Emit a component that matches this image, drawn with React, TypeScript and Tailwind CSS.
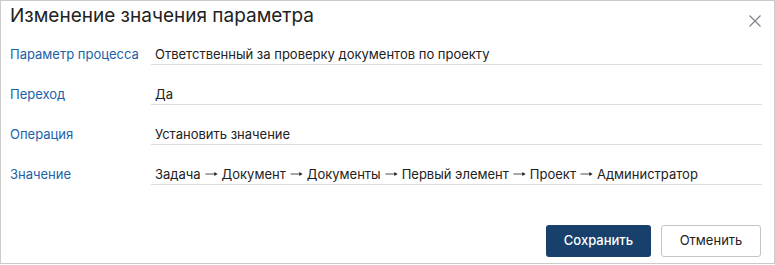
import React from 'react';

const rows: { label: string; value: string[] }[] = [
  { label: 'Параметр процесса', value: ['Ответственный за проверку документов по проекту'] },
  { label: 'Переход', value: ['Да'] },
  { label: 'Операция', value: ['Установить значение'] },
  {
    label: 'Значение',
    value: ['Задача', 'Документ', 'Документы', 'Первый элемент', 'Проект', 'Администратор'],
  },
];

const Arrow = () => (
  <svg width="13" height="8" viewBox="0 0 13 8" className="inline-block align-[1px] mx-[4px]" fill="#222">
    <path d="M0.5 3.6 H10 V4.4 H0.5 Z" />
    <path d="M9.3 2 L12.6 4 L9.3 6 Z" />
  </svg>
);

export default function App() {
  return (
    <div className="w-[775px] h-[264px] border border-[#cbcbcb] bg-white flex flex-col font-['Inter',sans-serif] text-[#222]">
      {/* Header */}
      <div className="h-[24px] flex items-start justify-between pl-[9px] pr-[12px]">
        <h1 className="pt-[5px] text-[19px] leading-[19px] font-normal text-[#222]">
          Изменение значения параметра
        </h1>
        <button className="mt-[13px] w-[14px] h-[14px] text-[#80868b]">
          <svg width="14" height="14" viewBox="0 0 14 14" fill="none" stroke="currentColor" strokeWidth="1.3">
            <path d="M1.5 1.5 L12.5 12.5 M12.5 1.5 L1.5 12.5" />
          </svg>
        </button>
      </div>

      {/* Fields */}
      <div className="flex flex-col pl-[9px] pr-[12px]">
        {rows.map((r) => (
          <div key={r.label} className="h-[40px] flex">
            <div className="w-[141px] shrink-0 flex items-end pb-[3px] text-[13px] leading-[16px] text-[#1b62a8]">
              {r.label}
            </div>
            <div className="flex-1 flex items-end border-b border-[#dedede] pl-[4px] pb-[2px] text-[13px] leading-[16px] text-[#222]">
              <span>
                {r.value.map((part, i) => (
                  <React.Fragment key={i}>
                    {i > 0 && <Arrow />}
                    {part}
                  </React.Fragment>
                ))}
              </span>
            </div>
          </div>
        ))}
      </div>

      <div className="flex-1" />

      {/* Footer */}
      <div className="flex justify-end gap-[10px] pr-[13px] pb-[6px]">
        <button className="w-[105px] h-[32px] rounded-[3px] bg-[#17416c] text-white text-[13px] font-medium">
          Сохранить
        </button>
        <button className="w-[100px] h-[32px] rounded-[3px] border border-[#c4c4c4] bg-white text-[#222] text-[13px]">
          Отменить
        </button>
      </div>
    </div>
  );
}
